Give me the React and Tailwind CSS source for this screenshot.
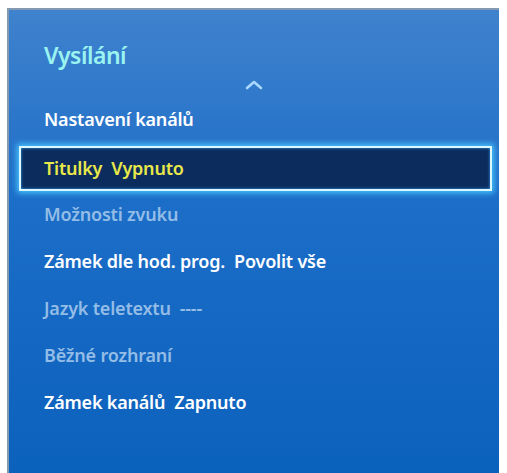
import React from 'react';

const items = [
  { label: 'Nastavení kanálů', tone: 'on' },
  { label: 'Titulky  Vypnuto', tone: 'focus' },
  { label: 'Možnosti zvuku', tone: 'off' },
  { label: 'Zámek dle hod. prog.  Povolit vše', tone: 'on' },
  { label: 'Jazyk teletextu  ----', tone: 'off' },
  { label: 'Běžné rozhraní', tone: 'off' },
  { label: 'Zámek kanálů  Zapnuto', tone: 'on' },
];

const ChevronUp = () => (
  <svg width="18" height="11" viewBox="0 0 18 11" fill="none">
    <path d="M2 9 L9 3 L16 9" stroke="#a9d8ff" strokeWidth="2.6" strokeLinecap="round" strokeLinejoin="round" />
  </svg>
);

const Row = ({ label, tone }) => {
  if (tone === 'focus') {
    return (
      <div className="ml-[10px] mr-[7px] mt-[3px] h-[45px] flex items-center pl-[23px] bg-[#0b2c5c] border-2 border-[#dcf8ff] shadow-[0_0_6px_2px_#49c6ff,inset_0_0_3px_#3aa8ff]">
        <span className="text-[#e8e84a]">{label}</span>
      </div>
    );
  }
  return (
    <div className="h-[47px] flex items-center pl-[35px]">
      <span className={tone === 'on' ? 'text-white' : 'text-[#93bde6]'}>{label}</span>
    </div>
  );
};

export default function App() {
  return (
    <div className="w-[507px] h-[473px] bg-white pt-[8px] pl-[7px] overflow-hidden" style={{ fontFamily: '"Noto Sans", "Open Sans", sans-serif' }}>
      <div className="w-[492px] h-[470px] border-t-2 border-l-2 border-[#8499b2] bg-gradient-to-b from-[#3f82cd] via-[#1c6ec8] via-40% to-[#0a61bc] font-semibold text-[18px] tracking-[-0.2px] whitespace-pre">
        <div className="pl-[35px] pt-[31px] text-[23px] leading-[28px] text-[#9af3f0] tracking-[-0.5px]">Vysílání</div>
        <div className="flex justify-center pt-[10px] h-[27px]">
          <ChevronUp />
        </div>
        <div className="flex flex-col">
          {items.map((it) => (
            <Row key={it.label} {...it} />
          ))}
        </div>
      </div>
    </div>
  );
}
